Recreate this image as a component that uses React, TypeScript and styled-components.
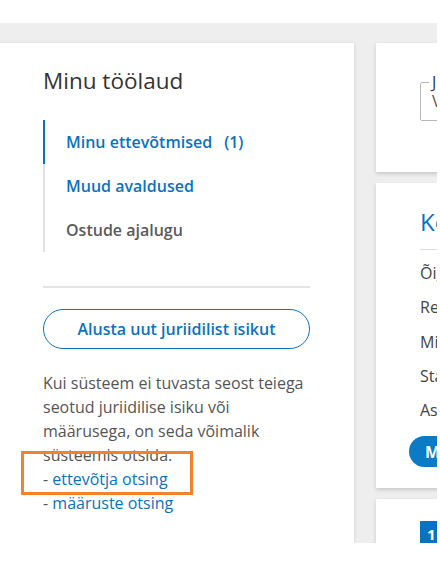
import styled, { createGlobalStyle } from 'styled-components';

const GlobalStyle = createGlobalStyle`
  body {
    margin: 0;
    background: #ffffff;
    font-family: 'Open Sans', 'Noto Sans', sans-serif;
  }
`;

const Page = styled.div`
  padding-top: 23px;
`;

const Board = styled.div`
  width: 437px;
  height: 520px;
  box-sizing: border-box;
  padding-top: 20px;
  background: #eeeeee;
  display: flex;
  gap: 22px;
  overflow: hidden;
`;

const MainCard = styled.section`
  flex: 0 0 354px;
  box-sizing: border-box;
  padding: 23px 44px 0 43px;
  background: #ffffff;
  box-shadow: 0 1px 4px rgba(0, 0, 0, 0.12);
`;

const Title = styled.h1`
  margin: 0 0 25px;
  font-size: 22.5px;
  line-height: 29px;
  font-weight: 500;
  color: #333333;
`;

const Nav = styled.ul`
  list-style: none;
  margin: 0;
  padding: 0;
`;

const NavItem = styled.li<{ $active?: boolean; $muted?: boolean }>`
  border-left: 2px solid ${(p) => (p.$active ? '#0b72c0' : '#e2e2e2')};
  padding-left: 21px;
  height: 44px;
  line-height: 44px;
  font-size: 16px;
  font-weight: 600;
  color: ${(p) => (p.$muted ? '#5a5a5a' : '#0b72c0')};
`;

const Count = styled.span`
  margin-left: 12px;
`;

const Divider = styled.hr`
  margin: 34px 0 0;
  border: 0;
  height: 2px;
  background: #e4e4e4;
`;

const OutlineButton = styled.button`
  display: block;
  width: 100%;
  height: 40px;
  margin-top: 21px;
  border: 1px solid #0b72c0;
  border-radius: 20px;
  background: #ffffff;
  color: #0b72c0;
  font-family: inherit;
  font-size: 16px;
  font-weight: 600;
`;

const Info = styled.div`
  position: relative;
  margin-top: 22px;
  font-size: 16px;
  line-height: 24px;
  color: #555555;
`;

const Link = styled.a`
  color: #0b72c0;
  text-decoration: none;
`;

const Highlight = styled.div`
  position: absolute;
  top: 80px;
  left: -22px;
  width: 172px;
  height: 44px;
  box-sizing: border-box;
  border: 3px solid #f5822b;
`;

const SideColumn = styled.div`
  flex: 0 0 300px;
  display: flex;
  flex-direction: column;
  gap: 11px;
`;

const SideCard = styled.section<{ $pad: string }>`
  box-sizing: border-box;
  padding: ${(p) => p.$pad};
  background: #ffffff;
  box-shadow: 0 2px 4px rgba(0, 0, 0, 0.16);
`;

const Field = styled.fieldset`
  margin: 0;
  width: 220px;
  padding: 0 0 10px 8px;
  border: 1px solid #b8b8b8;
  border-radius: 2px;
`;

const Legend = styled.legend`
  padding: 0 3px;
  font-size: 16px;
  line-height: 20px;
  color: #2b3a4f;
`;

const FieldValue = styled.div`
  padding-left: 3px;
  font-size: 16px;
  line-height: 18px;
  color: #555555;
  white-space: nowrap;
`;

const CardTitle = styled.h2`
  margin: 0;
  padding-bottom: 13px;
  border-bottom: 1px solid #dddddd;
  font-size: 24px;
  line-height: 29px;
  font-weight: 400;
  color: #0b72c0;
  white-space: nowrap;
`;

const Rows = styled.ul`
  list-style: none;
  margin: 6px 0 9px;
  padding: 0;
`;

const Row = styled.li`
  padding: 5px 0;
  font-size: 16px;
  line-height: 24.3px;
  color: #444444;
  white-space: nowrap;
`;

const FilledButton = styled.button`
  height: 31px;
  margin-left: -11px;
  padding: 0 16px;
  border: 0;
  border-radius: 16px;
  background: #0a7bc4;
  color: #ffffff;
  font-family: inherit;
  font-size: 16px;
  font-weight: 700;
  white-space: nowrap;
`;

const Badge = styled.span`
  display: inline-block;
  padding: 0 7px;
  height: 26px;
  line-height: 26px;
  background: #0b72c0;
  color: #ffffff;
  font-size: 15px;
  font-weight: 700;
`;

const details = ['Õiguslik vorm', 'Registrikood', 'Milline on staatus', 'Staatus', 'Asukoht'];

export default function App() {
  return (
    <Page>
      <GlobalStyle />
      <Board>
        <MainCard>
          <Title>Minu töölaud</Title>
          <Nav>
            <NavItem $active>
              Minu ettevõtmised<Count>(1)</Count>
            </NavItem>
            <NavItem>Muud avaldused</NavItem>
            <NavItem $muted>Ostude ajalugu</NavItem>
          </Nav>
          <Divider />
          <OutlineButton>Alusta uut juriidilist isikut</OutlineButton>
          <Info>
            Kui süsteem ei tuvasta seost teiega seotud juriidilise isiku või määrusega, on seda võimalik
            süsteemis otsida.
            <br />- <Link href="#">ettevõtja otsing</Link>
            <br />- <Link href="#">määruste otsing</Link>
            <Highlight />
          </Info>
        </MainCard>
        <SideColumn>
          <SideCard $pad="29px 0 51px 44px">
            <Field>
              <Legend>Juriidiline isik</Legend>
              <FieldValue>Vali juriidiline isik</FieldValue>
            </Field>
          </SideCard>
          <SideCard $pad="24px 0 21px 44px">
            <CardTitle>Kontaktandmed</CardTitle>
            <Rows>
              {details.map((d) => (
                <Row key={d}>{d}</Row>
              ))}
            </Rows>
            <FilledButton>Muuda andmeid</FilledButton>
          </SideCard>
          <SideCard $pad="22px 0 22px 44px">
            <Badge>1</Badge>
          </SideCard>
        </SideColumn>
      </Board>
    </Page>
  );
}
